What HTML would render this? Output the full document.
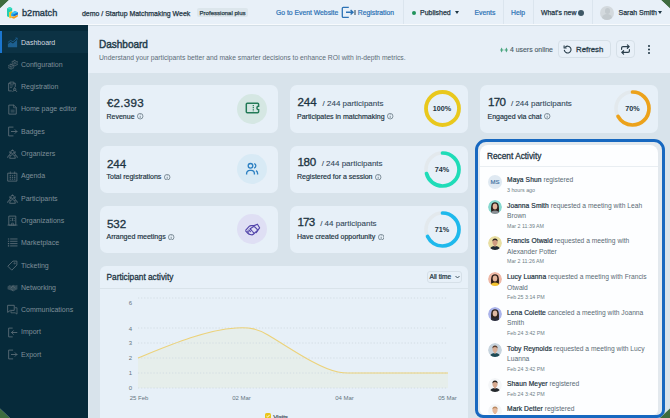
<!DOCTYPE html>
<html><head><meta charset="utf-8">
<style>
*{box-sizing:border-box;margin:0;padding:0}
html,body{width:670px;height:418px;overflow:hidden;background:#3e6b3e}
body{font-family:"Liberation Sans",sans-serif;color:#1d3442}
#page{position:absolute;left:0;top:0;width:670px;height:418px;background:#d8e3eb;overflow:hidden;
clip-path:polygon(9px 0,661px 0,670px 8.5px,670px 408.5px,659.8px 418px,10px 418px,0 408.5px,0 8.5px)}
.a{position:absolute;white-space:nowrap}
.sb{font-weight:normal !important;-webkit-text-stroke:0.25px currentColor}
#hdr{left:0;top:0;width:670px;height:25px;background:#e8f0f8;border-bottom:1px solid #f7fafd}
#side{left:0;top:25px;width:88px;height:393px;background:#062a3a}
.nav{position:absolute;left:0;width:88px;height:22.3px;font-size:7px;color:#7f8f99}
.nav svg{position:absolute;left:6.5px;top:5.8px;width:11px;height:11px}
.nav span{position:absolute;left:21px;top:7.6px;line-height:8px}
.nav.act{background:#0c3244;color:#d3dae0}
.nav.act:before{content:"";position:absolute;left:0;top:0;width:2px;height:100%;background:#1b76d0}
#titleband{left:88px;top:25px;width:582px;height:48px;background:#e7eff7;border-top:1px solid #d3dee6}
.card{position:absolute;background:#e7f0f8;border-radius:7px}
.big{position:absolute;font-size:11.6px;font-weight:normal;-webkit-text-stroke:0.32px #1d3442;color:#1d3442;line-height:12px;margin-top:0.3px;margin-left:0.4px}
.sub{position:absolute;font-size:7px;color:#1d3442;font-weight:normal;-webkit-text-stroke:0.18px #1d3442;line-height:8px;margin-top:-0.5px}
.frac{font-size:8px;font-weight:normal;-webkit-text-stroke:0.1px #33495a;color:#33495a;margin-left:5.8px;letter-spacing:0}
.info{display:inline-block;width:6.4px;height:6.4px;vertical-align:-1px;margin-left:2.8px}
.icirc{position:absolute;width:30px;height:30px;border-radius:50%}
.ring{position:absolute;width:37px;height:37px}
.pct{position:absolute;left:0;top:0;width:37px;height:37px;line-height:37px;font-size:7.2px;font-weight:bold;color:#1d3442;text-align:center}
.hl{color:#2c72b5;font-size:6.8px;-webkit-text-stroke:0.2px currentColor}
.sep{position:absolute;top:0;width:1px;height:24px;background:#dbe5ee}
.ra{position:absolute;left:507px;font-size:6.7px;color:#5b6b75;line-height:10px;white-space:nowrap}
.ra b{color:#1d3442;font-weight:normal;-webkit-text-stroke:0.2px #1d3442;letter-spacing:0.08px}
.rd{position:absolute;left:507px;font-size:5.3px;color:#6f7e88;white-space:nowrap;line-height:8px}
.av{position:absolute;left:488px;width:14px;height:14px;border-radius:50%;overflow:hidden}
</style></head><body>
<div id="page">
<!-- header -->
<div id="hdr" class="a"></div>
<svg class="a" style="left:4px;top:4px" width="18" height="18" viewBox="4 4 18 18">
<path d="M7 8.6 L9.6 7 L12.2 8.2 L12.2 11.2 L9.2 12.3 L9.2 17.3 L7 16.2Z" fill="#22cfb2"/>
<path d="M9.6 7 L12.2 8.2 L9.8 9.4 L7 8.6Z" fill="#3fe0c4"/>
<path d="M9.2 12.3 L12.2 11.2 L12.2 13 L11.2 13.6 L11.2 17.6 L10 18.4 L9.2 17.5Z" fill="#f4c21a"/>
<path d="M11.2 13.6 L14.6 11 L17.8 12.2 L17.8 14.6 L13.6 16.6 L11.2 16Z" fill="#17a6ea"/>
<path d="M14.6 11 L17.8 12.2 L14.4 14 L11.6 13.2Z" fill="#3cc3f5"/>
<path d="M13.4 14.4 L17.8 12.6 L17.8 14.6 L13.6 16.6Z" fill="#1b6fc7"/>
<path d="M11.2 16.2 L13.6 16.8 L17.8 14.8 L17.8 16.6 L14 18.8 L11.2 17.8Z" fill="#f59c1a"/>
</svg>
<div class="a" style="left:22px;top:7.7px;font-size:9.2px;color:#1f3a4a;line-height:10px;-webkit-text-stroke:0.35px #1f3a4a">b2match</div>
<div class="a sb" style="left:82px;top:8.5px;font-size:6.95px;color:#1f3644;line-height:9px">demo / Startup Matchmaking Week</div>
<div class="a" style="left:197.2px;top:7.9px;width:50.8px;height:9.6px;background:#dce6ec;border-radius:2px;font-size:6.05px;color:#2a3d49;line-height:10.4px;text-align:center;-webkit-text-stroke:0.25px #2a3d49">Professional plus</div>
<div class="a hl" style="left:276px;top:8.1px;line-height:9px">Go to Event Website</div>
<svg class="a" style="left:340.5px;top:6px" width="14" height="13" viewBox="0 0 14 13"><path d="M7.8 1.3 H2.3 Q1.3 1.3 1.3 2.3 V10.4 Q1.3 11.4 2.3 11.4 H7.8" fill="none" stroke="#2c72b5" stroke-width="1.3"/><path d="M5 6.2 H11.8 M9.6 4 L12 6.2 L9.6 8.4" fill="none" stroke="#2c72b5" stroke-width="1.4"/></svg>
<div class="a" style="left:354.4px;top:10.2px;width:1.3px;height:4.6px;background:#8798a3"></div>
<div class="a hl" style="left:357.8px;top:8.1px;line-height:9px">Registration</div>
<div class="sep" style="left:403px"></div>
<div class="a" style="left:412px;top:10.5px;width:4px;height:4px;border-radius:50%;background:#21935b"></div>
<div class="a" style="left:420px;top:8.1px;font-size:7px;color:#1f3644;line-height:9px;-webkit-text-stroke:0.25px #1f3644">Published</div>
<div class="a" style="left:454.5px;top:11px;width:0;height:0;border-left:2.5px solid transparent;border-right:2.5px solid transparent;border-top:3px solid #1f3644"></div>
<div class="a hl" style="left:474.5px;top:8.1px;line-height:9px">Events</div>
<div class="sep" style="left:502.5px"></div>
<div class="a hl" style="left:511px;top:8.1px;line-height:9px">Help</div>
<div class="sep" style="left:532.5px"></div>
<div class="a" style="left:541px;top:8.1px;font-size:6.9px;color:#1f3644;line-height:9px;-webkit-text-stroke:0.25px #1f3644">What's new</div>
<div class="a" style="left:578.2px;top:9.8px;width:6px;height:6px;border-radius:50%;background:#3f5866"></div>
<div class="sep" style="left:591.5px"></div>
<div class="a" style="left:600px;top:5.8px;width:14px;height:14px;border-radius:50%;background:#d3d9dd;overflow:hidden">
 <div class="a" style="left:4.5px;top:2.5px;width:5px;height:5.5px;border-radius:50%;background:#c3cace"></div>
 <div class="a" style="left:2px;top:8.1px;width:10px;height:8px;border-radius:50%;background:#c3cace"></div>
</div>
<div class="a" style="left:618.5px;top:8.1px;font-size:7px;color:#1f3644;line-height:9px;-webkit-text-stroke:0.25px #1f3644">Sarah Smith</div>
<div class="a" style="left:658.2px;top:11px;width:0;height:0;border-left:2.5px solid transparent;border-right:2.5px solid transparent;border-top:3px solid #1f3644"></div>

<!-- title band -->
<div id="titleband" class="a"></div>
<div class="a" style="left:99px;top:38.7px;font-size:10px;color:#1f3b4a;line-height:11px;-webkit-text-stroke:0.42px #1f3b4a">Dashboard</div>
<div class="a" style="left:99px;top:53.6px;font-size:6.75px;color:#5d6d78;line-height:7px">Understand your participants better and make smarter decisions to enhance ROI with in-depth metrics.</div>
<svg class="a" style="left:500px;top:46.5px" width="8" height="6" viewBox="0 0 8 6"><path d="M0.3 3 L1.6 0.6 L2.9 3 L1.6 5.4Z" fill="#4aa57f"/><path d="M5.1 3 L6.4 0.6 L7.7 3 L6.4 5.4Z" fill="#4aa57f"/><path d="M2.9 3 H5.1" stroke="#7cc3a5" stroke-width="0.6"/></svg>
<div class="a" style="left:510px;top:45.5px;font-size:6.9px;color:#4a5b66;line-height:7px;-webkit-text-stroke:0.12px #4a5b66">4 users online</div>
<div class="a" style="left:558px;top:40px;width:52.8px;height:18.2px;border:1px solid #d6e0e8;border-radius:4px;background:#e8f0f8"></div>
<svg class="a" style="left:562.5px;top:45px" width="9.5" height="9" viewBox="0 0 9.5 9"><path d="M2.3 2.1 A3.4 3.4 0 1 1 1.3 5.2" fill="none" stroke="#2a3f4c" stroke-width="1.1" stroke-linecap="round"/><path d="M1.1 0.9 V3 H3.2" fill="none" stroke="#2a3f4c" stroke-width="1.1" stroke-linecap="round" stroke-linejoin="round"/></svg>
<div class="a" style="left:576px;top:44.8px;font-size:7.8px;color:#2a3f4c;line-height:9px;-webkit-text-stroke:0.3px #2a3f4c">Refresh</div>
<div class="a" style="left:615.8px;top:40px;width:19px;height:18.2px;border:1px solid #d6e0e8;border-radius:4px;background:#e8f0f8"></div>
<svg class="a" style="left:620px;top:44.4px" width="11" height="11" viewBox="0 0 11 11"><path d="M1.6 5.3 V4 Q1.6 2.6 3 2.6 H9.2 M7.4 0.9 L9.2 2.6 L7.4 4.3 M9.4 5.7 V7 Q9.4 8.4 8 8.4 H1.8 M3.6 6.7 L1.8 8.4 L3.6 10.1" fill="none" stroke="#2a3f4c" stroke-width="1.2" stroke-linecap="round" stroke-linejoin="round"/></svg>
<div class="a" style="left:648.1px;top:44.8px;width:1.9px;height:1.9px;border-radius:50%;background:#1f3644;box-shadow:0 3.5px 0 #1f3644,0 7px 0 #1f3644"></div>

<!-- sidebar -->
<div id="side" class="a"></div>
<div class="a" style="left:88px;top:73px;width:2px;height:345px;background:linear-gradient(90deg,#e2ebf2,#d8e3eb)"></div>
<div id="nav">
<div class="nav act" style="top:31.0px"><svg viewBox="0 0 10 10"><path d="M0.8 9.4 V6.4 L3.2 4.6 L5.4 5.8 L9.2 2.6 V9.4Z" fill="#1d5f90"/><path d="M0.8 5 L3.2 3.1 L5.4 4.3 L9.2 1" fill="none" stroke="#1d5f90" stroke-width="0.8"/><path d="M7.6 0.9 H9.3 V2.6" fill="none" stroke="#1d5f90" stroke-width="0.7"/></svg><span>Dashboard</span></div>
<div class="nav" style="top:53.3px"><svg viewBox="0 0 10 10"><path d="M6.6 1.2 L7.4 1.2 L7.7 2 L8.5 2.4 L9.2 2 L9.6 2.8 L9.1 3.4 V4.2 L9.6 4.8 L9.1 5.6 L8.4 5.3 L7.7 5.7 L7.4 6.4 H6.6 L6.3 5.7 L5.5 5.3 L4.9 5.6 L4.4 4.8 L4.9 4.2 V3.4 L4.4 2.8 L4.9 2 L5.5 2.4 L6.3 2Z" fill="none" stroke="#5c6d77" stroke-width="0.7" stroke-linecap="round" stroke-linejoin="round"/><path d="M3.4 4.6 L4 4.6 L4.3 5.3 L5 5.6 L5.6 5.3 L6 6 L5.6 6.6 V7.3 L6 7.9 L5.6 8.6 L5 8.3 L4.3 8.6 L4 9.3 H3.4 L3.1 8.6 L2.4 8.3 L1.8 8.6 L1.4 7.9 L1.8 7.3 V6.6 L1.4 6 L1.8 5.3 L2.4 5.6 L3.1 5.3Z" fill="none" stroke="#5c6d77" stroke-width="0.7" stroke-linecap="round" stroke-linejoin="round"/><path d="M7 3.8 m-0.8 0 a0.8 0.8 0 1 0 1.6 0 a0.8 0.8 0 1 0 -1.6 0" fill="none" stroke="#5c6d77" stroke-width="0.6" stroke-linecap="round" stroke-linejoin="round"/><path d="M3.7 7 m-0.7 0 a0.7 0.7 0 1 0 1.4 0 a0.7 0.7 0 1 0 -1.4 0" fill="none" stroke="#5c6d77" stroke-width="0.6" stroke-linecap="round" stroke-linejoin="round"/></svg><span>Configuration</span></div>
<div class="nav" style="top:75.6px"><svg viewBox="0 0 10 10"><path d="M6.5 2 H7.5 V5 M4 9 H1.5 V2 H2.8" fill="none" stroke="#5c6d77" stroke-width="0.8" stroke-linecap="round" stroke-linejoin="round"/><path d="M3 1 H6.2 V2.8 H3Z" fill="none" stroke="#5c6d77" stroke-width="0.7" stroke-linecap="round" stroke-linejoin="round"/><path d="M3 4.5 H5.3 M3 6 H4.3" fill="none" stroke="#5c6d77" stroke-width="0.6" stroke-linecap="round" stroke-linejoin="round"/><path d="M7 6.3 A1.1 1.1 0 1 1 7 8.5 A1.1 1.1 0 1 1 7 6.3Z" fill="none" stroke="#5c6d77" stroke-width="0.7" stroke-linecap="round" stroke-linejoin="round"/><path d="M5.2 9.6 Q5.4 8.4 7 8.4 Q8.6 8.4 8.9 9.6" fill="none" stroke="#5c6d77" stroke-width="0.7" stroke-linecap="round" stroke-linejoin="round"/></svg><span>Registration</span></div>
<div class="nav" style="top:97.9px"><svg viewBox="0 0 10 10"><path d="M2 1 H6.2 L8.4 3.2 V9.2 H2Z" fill="none" stroke="#5c6d77" stroke-width="0.8" stroke-linecap="round" stroke-linejoin="round"/><path d="M6 1 V3.4 H8.4" fill="none" stroke="#5c6d77" stroke-width="0.6" stroke-linecap="round" stroke-linejoin="round"/><rect x="3.3" y="5" width="3.6" height="2.8" fill="#5c6d77" opacity="0.45"/></svg><span>Home page editor</span></div>
<div class="nav" style="top:120.2px"><svg viewBox="0 0 10 10"><path d="M5.5 1 H1.5 V9 H5.5" fill="none" stroke="#5c6d77" stroke-width="0.8" stroke-linecap="round" stroke-linejoin="round"/><path d="M4 5 H9 M7.4 3.4 L9 5 L7.4 6.6" fill="none" stroke="#5c6d77" stroke-width="0.8" stroke-linecap="round" stroke-linejoin="round"/></svg><span>Badges</span></div>
<div class="nav" style="top:142.5px"><svg viewBox="0 0 10 10"><path d="M5 2 A1.5 1.5 0 1 1 5 5 A1.5 1.5 0 1 1 5 2Z" fill="none" stroke="#5c6d77" stroke-width="0.8" stroke-linecap="round" stroke-linejoin="round"/><path d="M2.2 3.6 A1.1 1.1 0 1 1 2.2 5.8 M7.8 3.6 A1.1 1.1 0 1 0 7.8 5.8" fill="none" stroke="#5c6d77" stroke-width="0.8" stroke-linecap="round" stroke-linejoin="round"/><path d="M2.4 9 Q2.4 6 5 6 Q7.6 6 7.6 9Z" fill="none" stroke="#5c6d77" stroke-width="0.8" stroke-linecap="round" stroke-linejoin="round"/><path d="M0.6 8.6 Q0.6 6.6 2.2 6.6 M9.4 8.6 Q9.4 6.6 7.8 6.6" fill="none" stroke="#5c6d77" stroke-width="0.8" stroke-linecap="round" stroke-linejoin="round"/></svg><span>Organizers</span></div>
<div class="nav" style="top:164.8px"><svg viewBox="0 0 10 10"><path d="M1 2 H9 V9.2 H1Z" fill="none" stroke="#5c6d77" stroke-width="0.8" stroke-linecap="round" stroke-linejoin="round"/><path d="M3 0.8 V2.6 M7 0.8 V2.6" fill="none" stroke="#5c6d77" stroke-width="0.7" stroke-linecap="round" stroke-linejoin="round"/><path d="M2.4 4.3 H3.6 M4.4 4.3 H5.6 M6.4 4.3 H7.6 M2.4 5.8 H3.6 M4.4 5.8 H5.6 M6.4 5.8 H7.6 M2.4 7.4 H3.6 M4.4 7.4 H5.6 M6.4 7.4 H7.6" stroke="#5c6d77" stroke-width="0.9"/></svg><span>Agenda</span></div>
<div class="nav" style="top:187.1px"><svg viewBox="0 0 10 10"><path d="M5 2 A1.5 1.5 0 1 1 5 5 A1.5 1.5 0 1 1 5 2Z" fill="none" stroke="#5c6d77" stroke-width="0.8" stroke-linecap="round" stroke-linejoin="round"/><path d="M2.2 3.6 A1.1 1.1 0 1 1 2.2 5.8 M7.8 3.6 A1.1 1.1 0 1 0 7.8 5.8" fill="none" stroke="#5c6d77" stroke-width="0.8" stroke-linecap="round" stroke-linejoin="round"/><path d="M2.4 9 Q2.4 6 5 6 Q7.6 6 7.6 9Z" fill="none" stroke="#5c6d77" stroke-width="0.8" stroke-linecap="round" stroke-linejoin="round"/><path d="M0.6 8.6 Q0.6 6.6 2.2 6.6 M9.4 8.6 Q9.4 6.6 7.8 6.6" fill="none" stroke="#5c6d77" stroke-width="0.8" stroke-linecap="round" stroke-linejoin="round"/></svg><span>Participants</span></div>
<div class="nav" style="top:209.4px"><svg viewBox="0 0 10 10"><path d="M2 1 H8 V9.2 H2Z" fill="none" stroke="#5c6d77" stroke-width="0.8" stroke-linecap="round" stroke-linejoin="round"/><path d="M3.5 2.6 V3.6 M6.5 2.6 V3.6 M3.5 4.6 V5.6 M6.5 4.6 V5.6 M5 2.6 V5.6" stroke="#5c6d77" stroke-width="0.7"/><path d="M4.2 9.2 V7.4 H5.8 V9.2" fill="none" stroke="#5c6d77" stroke-width="0.6" stroke-linecap="round" stroke-linejoin="round"/><path d="M0.8 9.2 H9.2" fill="none" stroke="#5c6d77" stroke-width="0.7" stroke-linecap="round" stroke-linejoin="round"/></svg><span>Organizations</span></div>
<div class="nav" style="top:231.7px"><svg viewBox="0 0 10 10"><path d="M0.8 1.8 H2 M0.8 3.9 H2 M0.8 6 H2 M0.8 8.1 H2" stroke="#5c6d77" stroke-width="1"/><path d="M3.2 1.8 H9.2 M3.2 3.9 H9.2 M3.2 6 H9.2 M3.2 8.1 H9.2" fill="none" stroke="#5c6d77" stroke-width="0.8" stroke-linecap="round" stroke-linejoin="round"/></svg><span>Marketplace</span></div>
<div class="nav" style="top:254.0px"><svg viewBox="0 0 10 10"><path d="M1 5.4 L5.4 1 H9 V4.6 L4.6 9Z" fill="none" stroke="#5c6d77" stroke-width="0.8" stroke-linecap="round" stroke-linejoin="round"/><path d="M7 3 m-0.6 0 a0.6 0.6 0 1 0 1.2 0 a0.6 0.6 0 1 0 -1.2 0" fill="none" stroke="#5c6d77" stroke-width="0.6" stroke-linecap="round" stroke-linejoin="round"/></svg><span>Ticketing</span></div>
<div class="nav" style="top:276.3px"><svg viewBox="0 0 10 10"><path d="M0.5 4 L2.4 2.8 L4 3.4 L5.6 2.6 L7.4 3.2 L9.5 2.8 V6.6 L7.6 7.6 L5.8 8.6 L4.6 8 L3 7.6 L0.5 6.6Z" fill="#5c6d77" opacity="0.55"/><path d="M3.6 5.4 L5.4 3.8 L7.2 5.6 M4.2 6.8 L5.2 7.6" fill="none" stroke="#5c6d77" stroke-width="0.7" stroke-linecap="round" stroke-linejoin="round"/></svg><span>Networking</span></div>
<div class="nav" style="top:298.6px"><svg viewBox="0 0 10 10"><path d="M0.9 1.2 H6.6 V5.8 H3 L0.9 7.4Z" fill="none" stroke="#5c6d77" stroke-width="0.8" stroke-linecap="round" stroke-linejoin="round"/><path d="M7.6 3.4 H9.1 V9.2 L7.4 8 H3.6 V6.8" fill="none" stroke="#5c6d77" stroke-width="0.7" stroke-linecap="round" stroke-linejoin="round"/></svg><span>Communications</span></div>
<div class="nav" style="top:320.9px"><svg viewBox="0 0 10 10"><path d="M4.8 1 H1.5 V9 H4.8" fill="none" stroke="#5c6d77" stroke-width="0.8" stroke-linecap="round" stroke-linejoin="round"/><path d="M9 5 H4.2 M5.8 3.4 L4.2 5 L5.8 6.6" fill="none" stroke="#5c6d77" stroke-width="0.8" stroke-linecap="round" stroke-linejoin="round"/></svg><span>Import</span></div>
<div class="nav" style="top:343.2px"><svg viewBox="0 0 10 10"><path d="M5.2 1 H1.5 V9 H5.2" fill="none" stroke="#5c6d77" stroke-width="0.8" stroke-linecap="round" stroke-linejoin="round"/><path d="M4 5 H9 M7.4 3.4 L9 5 L7.4 6.6" fill="none" stroke="#5c6d77" stroke-width="0.8" stroke-linecap="round" stroke-linejoin="round"/></svg><span>Export</span></div>
</div>

<!-- cards -->
<div class="card" style="left:100px;top:85px;width:178px;height:47.5px"></div>
<div class="card" style="left:290px;top:85px;width:178px;height:47.5px"></div>
<div class="card" style="left:480px;top:85px;width:178px;height:47.5px"></div>
<div class="card" style="left:100px;top:145.5px;width:178px;height:47.5px"></div>
<div class="card" style="left:290px;top:145.5px;width:178px;height:47.5px"></div>
<div class="card" style="left:100px;top:205.5px;width:178px;height:47.5px"></div>
<div class="card" style="left:290px;top:205.5px;width:178px;height:47.5px"></div>

<div class="big" style="left:106.5px;top:97px;letter-spacing:0.25px">€2.393</div>
<div class="sub" style="left:106.5px;top:113px">Revenue<svg class="info" viewBox="0 0 6 6"><circle cx="3" cy="3" r="2.6" fill="none" stroke="#4a5d6a" stroke-width="0.6"/><path d="M3 2.6 V4.6" stroke="#4a5d6a" stroke-width="0.6"/><circle cx="3" cy="1.6" r="0.35" fill="#4a5d6a"/></svg></div>
<div class="icirc" style="left:237px;top:93.7px;background:#d5e7e3"></div>
<svg class="a" style="left:244px;top:101px" width="16" height="14" viewBox="0 0 16 14"><path d="M3.3 2.2 H13.6 Q14.6 2.2 14.6 3.2 V5.3 A1.7 1.7 0 0 0 14.6 8.7 V10.8 Q14.6 11.8 13.6 11.8 H3.3 Q2.3 11.8 2.3 10.8 V3.2 Q2.3 2.2 3.3 2.2Z" fill="none" stroke="#237a57" stroke-width="1.5"/><path d="M9.3 4 V10.5" stroke="#237a57" stroke-width="1.2" stroke-dasharray="1.2 0.9"/></svg>

<div class="big" style="left:106.5px;top:157.5px">244</div>
<div class="sub" style="left:106.5px;top:173.5px">Total registrations<svg class="info" viewBox="0 0 6 6"><circle cx="3" cy="3" r="2.6" fill="none" stroke="#4a5d6a" stroke-width="0.6"/><path d="M3 2.6 V4.6" stroke="#4a5d6a" stroke-width="0.6"/><circle cx="3" cy="1.6" r="0.35" fill="#4a5d6a"/></svg></div>
<div class="icirc" style="left:237px;top:154px;background:#d8eaf5"></div>
<svg class="a" style="left:245px;top:162px" width="14" height="14" viewBox="0 0 14 14"><circle cx="5.5" cy="3.8" r="2.3" fill="none" stroke="#2d80c2" stroke-width="1.35"/><path d="M1.6 12.4 V11.6 A3.3 3.3 0 0 1 4.9 8.3 H6.1 A3.3 3.3 0 0 1 9.4 11.6 V12.4" fill="none" stroke="#2d80c2" stroke-width="1.35"/><path d="M9.2 1.6 A2.3 2.3 0 0 1 9.2 6 M11 8.6 A3 3 0 0 1 12.6 11.4 V12.4" fill="none" stroke="#2d80c2" stroke-width="1.35"/></svg>

<div class="big" style="left:106.5px;top:217.5px">532</div>
<div class="sub" style="left:106.5px;top:233.5px">Arranged meetings<svg class="info" viewBox="0 0 6 6"><circle cx="3" cy="3" r="2.6" fill="none" stroke="#4a5d6a" stroke-width="0.6"/><path d="M3 2.6 V4.6" stroke="#4a5d6a" stroke-width="0.6"/><circle cx="3" cy="1.6" r="0.35" fill="#4a5d6a"/></svg></div>
<div class="icirc" style="left:237px;top:214.3px;background:#dfdff4"></div>
<svg class="a" style="left:243.5px;top:220.5px" width="17" height="17" viewBox="0 0 17 17"><g fill="none" stroke="#5345aa" stroke-width="1.15" stroke-linejoin="round" stroke-linecap="round"><path d="M1.8 9.2 L5.2 5.4 Q6.2 4.4 7.6 4.6 L10.2 4.6 L13.4 3.2 L15.6 6.8 L12.2 11.6"/><path d="M6.2 7.8 L9.2 5.8 Q10.1 5.3 11 6.1 L13.2 8.4 Q13.7 9.1 13 9.8 L9.6 13 Q8.6 14 7.4 13.8 L5.8 13.4 Q4.6 13 3.6 12 L1.8 10.2"/><path d="M3.6 10.2 L4.6 11.2 M4.8 9 L6.4 10.6 M6.2 8 L8 9.8 M8.6 10.6 L9.8 11.8"/></g></svg>

<div class="big" style="left:297px;top:95.7px">244<span class="frac">/ 244 participants</span></div>
<div class="sub" style="left:297px;top:113px">Participates in matchmaking<svg class="info" viewBox="0 0 6 6"><circle cx="3" cy="3" r="2.6" fill="none" stroke="#4a5d6a" stroke-width="0.6"/><path d="M3 2.6 V4.6" stroke="#4a5d6a" stroke-width="0.6"/><circle cx="3" cy="1.6" r="0.35" fill="#4a5d6a"/></svg></div>
<div class="ring" style="left:423.5px;top:90px"><svg width="37" height="37" viewBox="0 0 37 37"><circle cx="18.5" cy="18.5" r="16.5" fill="none" stroke="#e5ebf0" stroke-width="3.8"/><circle cx="18.5" cy="18.5" r="16.5" fill="none" stroke="#e9c81d" stroke-width="3.8" stroke-dasharray="103.67 200" transform="rotate(-90 18.5 18.5)"/></svg><div class="pct">100%</div></div>

<div class="big" style="left:297px;top:156.2px;letter-spacing:-0.3px">180<span class="frac">/ 244 participants</span></div>
<div class="sub" style="left:297px;top:173.5px">Registered for a session<svg class="info" viewBox="0 0 6 6"><circle cx="3" cy="3" r="2.6" fill="none" stroke="#4a5d6a" stroke-width="0.6"/><path d="M3 2.6 V4.6" stroke="#4a5d6a" stroke-width="0.6"/><circle cx="3" cy="1.6" r="0.35" fill="#4a5d6a"/></svg></div>
<div class="ring" style="left:423.5px;top:150.5px"><svg width="37" height="37" viewBox="0 0 37 37"><circle cx="18.5" cy="18.5" r="16.5" fill="none" stroke="#e3e9ed" stroke-width="3.6"/><circle cx="18.5" cy="18.5" r="16.5" fill="none" stroke="#1fdcb8" stroke-width="3.7" stroke-linecap="round" stroke-dasharray="73.12 200" transform="rotate(-90 18.5 18.5)"/></svg><div class="pct">74%</div></div>

<div class="big" style="left:297px;top:216.2px;letter-spacing:-0.8px">173<span class="frac">/ 44 participants</span></div>
<div class="sub" style="left:297px;top:233.5px">Have created opportunity<svg class="info" viewBox="0 0 6 6"><circle cx="3" cy="3" r="2.6" fill="none" stroke="#4a5d6a" stroke-width="0.6"/><path d="M3 2.6 V4.6" stroke="#4a5d6a" stroke-width="0.6"/><circle cx="3" cy="1.6" r="0.35" fill="#4a5d6a"/></svg></div>
<div class="ring" style="left:423.5px;top:210.5px"><svg width="37" height="37" viewBox="0 0 37 37"><circle cx="18.5" cy="18.5" r="16.5" fill="none" stroke="#e3e9ed" stroke-width="3.6"/><circle cx="18.5" cy="18.5" r="16.5" fill="none" stroke="#1eb9ec" stroke-width="3.7" stroke-linecap="round" stroke-dasharray="70.01 200" transform="rotate(-90 18.5 18.5)"/></svg><div class="pct">71%</div></div>

<div class="big" style="left:487.5px;top:95.7px;letter-spacing:-0.7px">170<span class="frac">/ 244 participants</span></div>
<div class="sub" style="left:487.5px;top:113px">Engaged via chat<svg class="info" viewBox="0 0 6 6"><circle cx="3" cy="3" r="2.6" fill="none" stroke="#4a5d6a" stroke-width="0.6"/><path d="M3 2.6 V4.6" stroke="#4a5d6a" stroke-width="0.6"/><circle cx="3" cy="1.6" r="0.35" fill="#4a5d6a"/></svg></div>
<div class="ring" style="left:614px;top:90px"><svg width="37" height="37" viewBox="0 0 37 37"><circle cx="18.5" cy="18.5" r="16.5" fill="none" stroke="#e3e9ed" stroke-width="3.6"/><circle cx="18.5" cy="18.5" r="16.5" fill="none" stroke="#eca21b" stroke-width="3.7" stroke-linecap="round" stroke-dasharray="68.97 200" transform="rotate(-90 18.5 18.5)"/></svg><div class="pct">70%</div></div>

<!-- chart -->
<div class="card" style="left:100px;top:266px;width:368px;height:160px;border-radius:6px"></div>
<div class="a" style="left:100px;top:288px;width:368px;height:1px;background:#d9e3ea"></div>
<div class="a" style="left:106.5px;top:272.8px;font-size:8.3px;color:#1d3442;line-height:9px;-webkit-text-stroke:0.28px #1d3442">Participant activity</div>
<div class="a" style="left:426.5px;top:271px;width:35.5px;height:11.5px;border:1px solid #d6e0e8;border-radius:3px"></div>
<div class="a" style="left:429.5px;top:273px;font-size:6.6px;color:#1d3442;line-height:8px;-webkit-text-stroke:0.22px #1d3442">All time</div>
<svg class="a" style="left:455px;top:275px" width="5" height="4" viewBox="0 0 5 4"><path d="M0.5 1 L2.5 3 L4.5 1" fill="none" stroke="#1d3442" stroke-width="0.8"/></svg>
<svg class="a" style="left:100px;top:288px" width="368" height="130" viewBox="100 288 368 130">
 <path d="M138 358 C170 345 205 330 236 328 C250 327 258 329 268 335 C290 348 318 368 338 372 C341 372.6 344 373 348 373 L448 373 L448 388 L138 388Z" fill="#e8d238" fill-opacity="0.065"/>
 <g stroke="#d0dae2" stroke-width="0.9" stroke-dasharray="1.2 1.9">
  <path d="M138 298 H448 M138 328 H448 M138 343 H448 M138 358 H448 M138 373 H448 M138 388 H448"/>
 </g>
 <path d="M138 358 C170 345 205 330 236 328 C250 327 258 329 268 335 C290 348 318 368 338 372 C341 372.6 344 373 348 373 L448 373" fill="none" stroke="#ecd27a" stroke-width="1.1"/>
 <g font-family="Liberation Sans" font-size="6" fill="#66757f" text-anchor="middle">
  <text x="130.5" y="304.5">6</text><text x="130.5" y="330.5">4</text><text x="130.5" y="345">3</text><text x="130.5" y="360">2</text><text x="130.5" y="375">1</text><text x="130.5" y="390">0</text>
  <text x="139" y="400">25 Feb</text><text x="241.5" y="400">02 Mar</text><text x="344.5" y="400">04 Mar</text><text x="447.5" y="400">05 Mar</text>
 </g>
</svg>
<svg class="a" style="left:265px;top:412.6px" width="6" height="6" viewBox="0 0 6 6"><rect width="6" height="6" rx="1.6" fill="#e9c51a"/><path d="M1.5 3.1 L2.6 4.1 L4.6 1.9" fill="none" stroke="#fff" stroke-width="0.9"/></svg>
<div class="a" style="left:273.3px;top:412.6px;font-size:6.2px;color:#33434d;line-height:7px;-webkit-text-stroke:0.2px #33434d">Visits</div>

<!-- recent activity -->
<div class="a" style="left:474.6px;top:139.2px;width:190.8px;height:279px;border:3.4px solid #1768c0;border-radius:11px 11px 8px 8px;background:#e3e9ee"></div>
<div class="a" style="left:480px;top:145px;width:178px;height:269.6px;background:#fdfeff;border-radius:8px 8px 5px 5px"></div>
<div class="a" style="left:487px;top:151.6px;font-size:8.3px;color:#1d3442;line-height:9px;-webkit-text-stroke:0.28px #1d3442">Recent Activity</div>
<div class="a" style="left:480px;top:166.3px;width:178px;height:1.2px;background:#e9eef2"></div>
<div id="ra" style="position:absolute;left:0;top:0;width:670px;height:413.5px;overflow:hidden">
<div class="av" style="top:174.6px;background:#dfe9f2;color:#3a6f9f;font-size:6px;-webkit-text-stroke:0.15px #3a6f9f;text-align:center;line-height:14.4px">MS</div>
<div class="ra" style="top:175.2px"><b>Maya Shun</b> registered</div>
<div class="rd" style="top:185.8px">3 hours ago</div>
<svg class="av" style="top:200.2px" viewBox="0 0 14 14"><circle cx="7" cy="7" r="7" fill="#86d9cf"/><path d="M3.2 12 Q2.6 6 4 3.6 Q7 0.8 10 3.6 Q11.4 6 10.8 12Z" fill="#2e211c"/><path d="M2 14 Q3 10.5 7 10.5 Q11 10.5 12 14Z" fill="#8a8f94"/><ellipse cx="7" cy="6.6" rx="2.3" ry="3" fill="#e2b69c"/></svg>
<div class="ra" style="top:200.8px"><b>Joanna Smith</b> requested a meeting with Leah</div>
<div class="ra" style="top:211.0px">Brown</div>
<div class="rd" style="top:221.5px">Mar 2 11:39 AM</div>
<svg class="av" style="top:235.8px" viewBox="0 0 14 14"><circle cx="7" cy="7" r="7" fill="#e8dea2"/><path d="M1.5 14 Q2.5 10 7 10 Q11.5 10 12.5 14Z" fill="#1f2a33"/><rect x="6" y="8" width="2" height="2.5" fill="#cf9c80"/><ellipse cx="7" cy="6.2" rx="2.5" ry="3.1" fill="#cf9c80"/><path d="M4.4 5.6 Q4.3 2.6 7 2.6 Q9.7 2.6 9.6 5.6 Q8.8 4 7 4.1 Q5.2 4 4.4 5.6Z" fill="#2a2220"/></svg>
<div class="ra" style="top:236.4px"><b>Francis Otwald</b> requested a meeting with</div>
<div class="ra" style="top:246.6px">Alexander Potter</div>
<div class="rd" style="top:257.1px">Mar 2 11:26 AM</div>
<svg class="av" style="top:271.7px" viewBox="0 0 14 14"><circle cx="7" cy="7" r="7" fill="#eeb8a6"/><path d="M3.2 12 Q2.6 6 4 3.6 Q7 0.8 10 3.6 Q11.4 6 10.8 12Z" fill="#2c1e1a"/><path d="M2 14 Q3 10.5 7 10.5 Q11 10.5 12 14Z" fill="#f2c230"/><ellipse cx="7" cy="6.6" rx="2.3" ry="3" fill="#e4b49a"/></svg>
<div class="ra" style="top:272.3px"><b>Lucy Luanna</b> requested a meeting with Francis</div>
<div class="ra" style="top:282.5px">Otwald</div>
<div class="rd" style="top:293.0px">Feb 25 3:14 PM</div>
<svg class="av" style="top:307.2px" viewBox="0 0 14 14"><circle cx="7" cy="7" r="7" fill="#aab3ea"/><path d="M3.2 12 Q2.6 6 4 3.6 Q7 0.8 10 3.6 Q11.4 6 10.8 12Z" fill="#2e221e"/><path d="M2 14 Q3 10.5 7 10.5 Q11 10.5 12 14Z" fill="#2a2a35"/><ellipse cx="7" cy="6.6" rx="2.3" ry="3" fill="#e0b8a2"/></svg>
<div class="ra" style="top:307.8px"><b>Lena Colette</b> canceled a meeting with Joanna</div>
<div class="ra" style="top:318.0px">Smith</div>
<div class="rd" style="top:328.5px">Feb 24 3:42 PM</div>
<svg class="av" style="top:343.2px" viewBox="0 0 14 14"><circle cx="7" cy="7" r="7" fill="#c7d4de"/><path d="M1.5 14 Q2.5 10 7 10 Q11.5 10 12.5 14Z" fill="#1d4a55"/><rect x="6" y="8" width="2" height="2.5" fill="#d8ae96"/><ellipse cx="7" cy="6.2" rx="2.5" ry="3.1" fill="#d8ae96"/><path d="M4.4 5.6 Q4.3 2.6 7 2.6 Q9.7 2.6 9.6 5.6 Q8.8 4 7 4.1 Q5.2 4 4.4 5.6Z" fill="#5a4030"/></svg>
<div class="ra" style="top:343.8px"><b>Toby Reynolds</b> requested a meeting with Lucy</div>
<div class="ra" style="top:354.0px">Luanna</div>
<div class="rd" style="top:364.5px">Feb 24 3:42 PM</div>
<svg class="av" style="top:378.4px" viewBox="0 0 14 14"><circle cx="7" cy="7" r="7" fill="#f4f6f8"/><path d="M1.5 14 Q2.5 10 7 10 Q11.5 10 12.5 14Z" fill="#23272c"/><rect x="6" y="8" width="2" height="2.5" fill="#d6a88e"/><ellipse cx="7" cy="6.2" rx="2.5" ry="3.1" fill="#d6a88e"/><path d="M4.4 5.6 Q4.3 2.6 7 2.6 Q9.7 2.6 9.6 5.6 Q8.8 4 7 4.1 Q5.2 4 4.4 5.6Z" fill="#2a2420"/></svg>
<div class="ra" style="top:379.0px"><b>Shaun Meyer</b> registered</div>
<div class="rd" style="top:389.6px">Feb 24 3:42 PM</div>
<svg class="av" style="top:403.8px" viewBox="0 0 14 14"><circle cx="7" cy="7" r="7" fill="#f4f6f8"/><path d="M1.5 14 Q2.5 10 7 10 Q11.5 10 12.5 14Z" fill="#6d8aa0"/><rect x="6" y="8" width="2" height="2.5" fill="#e6b89a"/><ellipse cx="7" cy="6.2" rx="2.5" ry="3.1" fill="#e6b89a"/><path d="M4.4 5.6 Q4.3 2.6 7 2.6 Q9.7 2.6 9.6 5.6 Q8.8 4 7 4.1 Q5.2 4 4.4 5.6Z" fill="#b88a62"/></svg>
<div class="ra" style="top:404.4px"><b>Mark Detter</b> registered</div>
</div>
</div>
</body></html>
